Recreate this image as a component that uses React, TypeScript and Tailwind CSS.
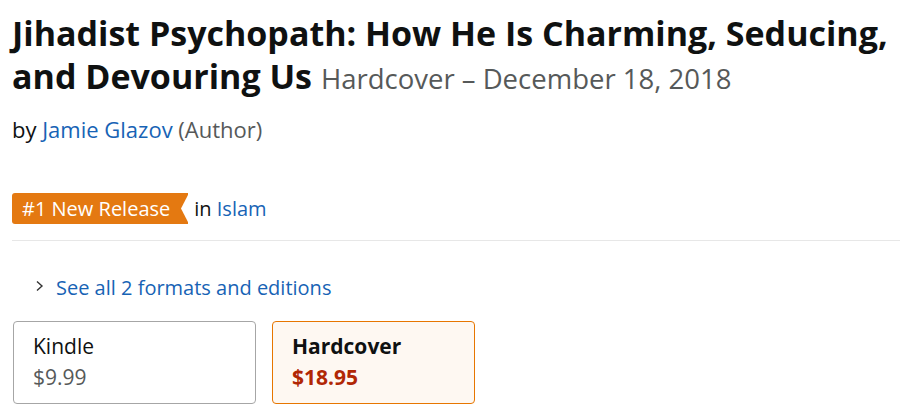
import React from 'react';

function Badge() {
  return (
    <span className="relative inline-flex items-center h-[31px] bg-[#e47911] text-white pl-[10px] pr-[18px] rounded-l-[3px]">
      #1 New Release
      <svg className="absolute right-[-1px] top-0" width="10" height="31" viewBox="0 0 10 31">
        <polygon points="10,0 10,31 2,15.5" fill="#ffffff" />
      </svg>
    </span>
  );
}

function FormatCard({
  name,
  price,
  selected,
}: {
  name: string;
  price: string;
  selected?: boolean;
}) {
  return (
    <div
      className={
        selected
          ? 'h-[83px] rounded-[4px] border border-[#e77600] bg-[#fef8f2] pl-[19px] pt-[9px]'
          : 'h-[83px] rounded-[4px] border border-[#a6a6a6] bg-white pl-[19px] pt-[9px]'
      }
    >
      <div className={selected ? 'text-[21px] font-bold text-[#0f1111] leading-[30px]' : 'text-[21px] text-[#0f1111] leading-[30px]'}>
        {name}
      </div>
      <div className={selected ? 'text-[21px] font-bold text-[#b12704] leading-[32px]' : 'text-[21px] text-[#565959] leading-[32px]'}>
        {price}
      </div>
    </div>
  );
}

export default function App() {
  return (
    <div className="w-[900px] h-[419px] bg-white overflow-hidden pl-[12px] font-['Open_Sans',sans-serif] text-[#0f1111]">
      <h1 className="pt-[12px] text-[34px] leading-[43px] font-bold whitespace-nowrap">
        Jihadist Psychopath: How He Is Charming, Seducing,
        <br />
        and Devouring Us{' '}
        <span className="text-[27.5px] font-normal text-[#565959]">Hardcover – December 18, 2018</span>
      </h1>
      <div className="mt-[15px] text-[22px] leading-[28px]">
        by <span className="text-[#1763b5]">Jamie Glazov</span>{' '}
        <span className="text-[#565959]">(Author)</span>
      </div>
      <div className="mt-[50px] flex items-center gap-[6px] text-[20px]">
        <Badge />
        <span>
          in <span className="text-[#1763b5]">Islam</span>
        </span>
      </div>
      <div className="mt-[16px] h-px bg-[#e7e7e7]" />
      <div className="mt-[33px] flex items-center pl-[23px] text-[20px] text-[#1763b5] leading-[28px]">
        <svg width="10" height="12" viewBox="0 0 10 12" className="mr-[11px] -mt-[4px]">
          <path d="M2 1.5 L7 6 L2 10.5" stroke="#333" strokeWidth="1.4" fill="none" />
        </svg>
        See all 2 formats and editions
      </div>
      <div className="mt-[19px] flex gap-[16px] pl-[1px]">
        <div className="w-[243px]">
          <FormatCard name="Kindle" price="$9.99" />
        </div>
        <div className="w-[203px]">
          <FormatCard name="Hardcover" price="$18.95" selected />
        </div>
      </div>
    </div>
  );
}
